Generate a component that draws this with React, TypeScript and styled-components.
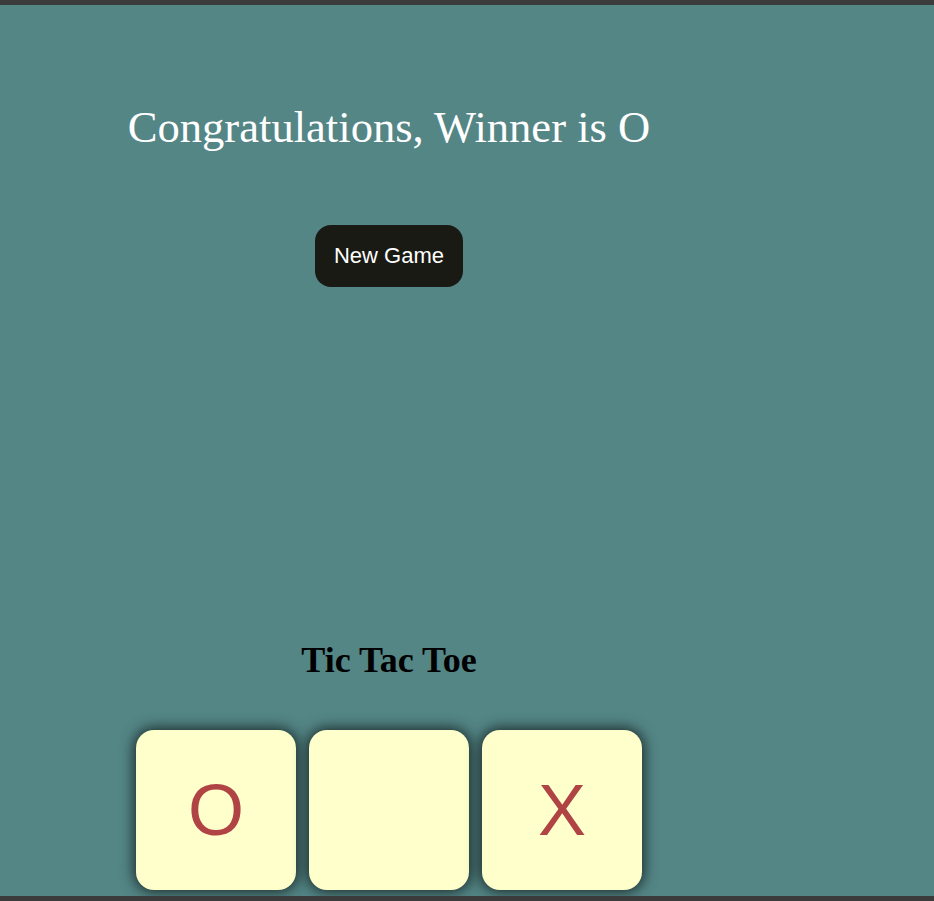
import React, { useState } from 'react';
import styled, { createGlobalStyle } from 'styled-components';

const GlobalStyle = createGlobalStyle`
  html, body {
    margin: 0;
    padding: 0;
    background: #3b3b3b;
  }
  body {
    font-family: "Liberation Serif", "Times New Roman", serif;
  }
`;

const Frame = styled.div`
  height: 901px;
  display: flex;
  flex-direction: column;
  background: #3b3b3b;
`;

const Edge = styled.div`
  height: 5px;
  flex: none;
  background: #3b3b3b;
`;

const Stage = styled.main`
  flex: 1;
  background: #548686;
  overflow: hidden;
`;

const Column = styled.div`
  width: 778px;
  display: flex;
  flex-direction: column;
  align-items: center;
`;

const Banner = styled.h1`
  margin: 96px 0 0;
  font-size: 44.6px;
  font-weight: normal;
  color: #ffffff;
  line-height: normal;
`;

const NewGameButton = styled.button`
  margin-top: 72px;
  padding: 18px 19px;
  border: none;
  border-radius: 16px;
  background: #1a1a14;
  color: #ffffff;
  font-family: "Liberation Sans", Arial, sans-serif;
  font-size: 22px;
  line-height: 26px;
  cursor: pointer;
`;

const Title = styled.h2`
  margin: 352px 0 0;
  font-size: 36px;
  font-weight: bold;
  color: #000000;
  line-height: normal;
`;

const Board = styled.div`
  margin-top: 49px;
  display: flex;
  gap: 13px;
`;

const Cell = styled.div`
  width: 160px;
  height: 160px;
  border-radius: 18px;
  background: #ffffcc;
  box-shadow: 0 0 14px 2px rgba(0, 0, 0, 0.7);
  display: flex;
  align-items: center;
  justify-content: center;
  font-family: "Liberation Sans", Arial, sans-serif;
  font-size: 72px;
  color: #b04444;
  cursor: pointer;
`;

type Mark = 'O' | 'X' | '';

export default function App() {
  const [cells, setCells] = useState<Mark[]>(['O', '', 'X']);
  const winner = 'O';

  const reset = () => setCells(['', '', '']);

  return (
    <>
      <GlobalStyle />
      <Frame>
        <Edge />
        <Stage>
          <Column>
            <Banner>Congratulations, Winner is {winner}</Banner>
            <NewGameButton onClick={reset}>New Game</NewGameButton>
            <Title>Tic Tac Toe</Title>
            <Board>
              {cells.map((c, i) => (
                <Cell key={i}>{c}</Cell>
              ))}
            </Board>
          </Column>
        </Stage>
        <Edge />
      </Frame>
    </>
  );
}
